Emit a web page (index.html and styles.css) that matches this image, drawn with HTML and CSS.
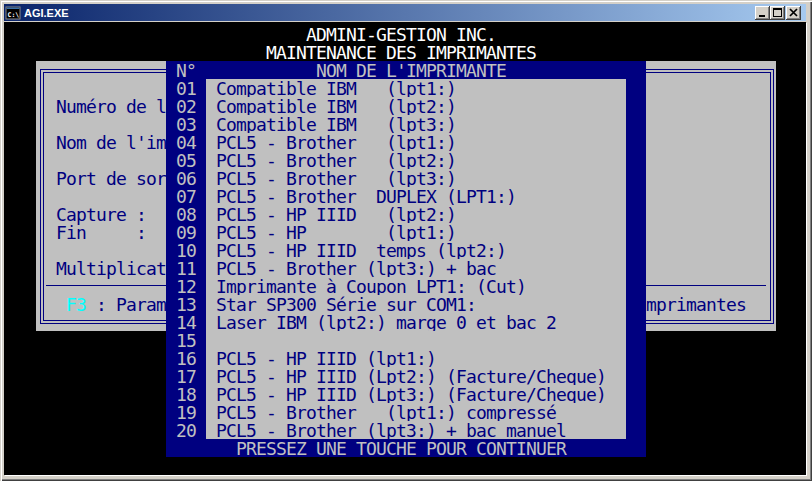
FILE: index.html
```html
<!DOCTYPE html>
<html lang="fr">
<head>
    <meta charset="UTF-8">
    <title>AGI.EXE</title>
    <link rel="stylesheet" href="styles.css">
</head>
<body>
    <div class="window">
        <div class="titlebar">
            <svg class="app-icon" width="16" height="16" viewBox="0 0 16 16">
                <rect x="1" y="2" width="14" height="12" fill="#000" stroke="#8a8a8a" stroke-width="1"/>
                <rect x="1.5" y="2.5" width="13" height="1.5" fill="#3a6ea5"/>
                <text x="2.5" y="11.5" font-family="DejaVu Sans Mono, monospace" font-size="6.5" font-weight="bold" fill="#fff">C:\</text>
            </svg>
            <span class="title">AGI.EXE</span>
            <div class="controls">
                <div class="ctl">
                    <svg width="15" height="14" viewBox="0 0 15 14" shape-rendering="crispEdges"><rect x="4" y="9" width="6" height="2" fill="#000"/></svg>
                </div>
                <div class="ctl">
                    <svg width="15" height="14" viewBox="0 0 15 14" shape-rendering="crispEdges"><rect x="3.5" y="2.5" width="8" height="8" fill="none" stroke="#000"/><rect x="3" y="3" width="9" height="1" fill="#000"/></svg>
                </div>
                <div class="ctl close">
                    <svg width="15" height="14" viewBox="0 0 15 14"><path d="M4 3 L11 10 M11 3 L4 10" stroke="#000" stroke-width="1.7"/></svg>
                </div>
            </div>
        </div>

        <div class="console">
            <div class="screen">
                <div class="line heading heading-1">ADMINI-GESTION INC.</div>
                <div class="line heading heading-2">MAINTENANCE DES IMPRIMANTES</div>

                <!-- fiche imprimante (sous la liste) -->
                <div class="panel">
                    <div class="frame">
                        <div class="frame-inner">
                            <div class="field">Numéro de l'imprimante :</div>
                            <div class="field"></div>
                            <div class="field">Nom de l'imprimante    :</div>
                            <div class="field"></div>
                            <div class="field">Port de sortie         :</div>
                            <div class="field"></div>
                            <div class="field">Capture :</div>
                            <div class="field">Fin     :</div>
                            <div class="field"></div>
                            <div class="field">Multiplicateur de caractères :</div>
                            <div class="rule"></div>
                            <div class="field"> <span class="key">F3</span> : Paramètres       ESC : Retour       F10 : Liste des imprimantes</div>
                        </div>
                    </div>
                </div>

                <!-- liste des imprimantes -->
                <div class="popup">
                    <div class="popup-head"><span class="no">N°</span><span class="head-title">NOM DE L'IMPRIMANTE</span></div>
                    <div class="entries">
                        <div class="entry"><span class="no">01</span><span class="name">Compatible IBM   (lpt1:)</span></div>
                        <div class="entry"><span class="no">02</span><span class="name">Compatible IBM   (lpt2:)</span></div>
                        <div class="entry"><span class="no">03</span><span class="name">Compatible IBM   (lpt3:)</span></div>
                        <div class="entry"><span class="no">04</span><span class="name">PCL5 - Brother   (lpt1:)</span></div>
                        <div class="entry"><span class="no">05</span><span class="name">PCL5 - Brother   (lpt2:)</span></div>
                        <div class="entry"><span class="no">06</span><span class="name">PCL5 - Brother   (lpt3:)</span></div>
                        <div class="entry"><span class="no">07</span><span class="name">PCL5 - Brother  DUPLEX (LPT1:)</span></div>
                        <div class="entry"><span class="no">08</span><span class="name">PCL5 - HP IIID   (lpt2:)</span></div>
                        <div class="entry"><span class="no">09</span><span class="name">PCL5 - HP        (lpt1:)</span></div>
                        <div class="entry"><span class="no">10</span><span class="name">PCL5 - HP IIID  temps (lpt2:)</span></div>
                        <div class="entry"><span class="no">11</span><span class="name">PCL5 - Brother (lpt3:) + bac</span></div>
                        <div class="entry"><span class="no">12</span><span class="name">Imprimante à Coupon LPT1: (Cut)</span></div>
                        <div class="entry"><span class="no">13</span><span class="name">Star SP300 Série sur COM1:</span></div>
                        <div class="entry"><span class="no">14</span><span class="name">Laser IBM (lpt2:) marge 0 et bac 2</span></div>
                        <div class="entry"><span class="no">15</span><span class="name"></span></div>
                        <div class="entry"><span class="no">16</span><span class="name">PCL5 - HP IIID (lpt1:)</span></div>
                        <div class="entry"><span class="no">17</span><span class="name">PCL5 - HP IIID (Lpt2:) (Facture/Cheque)</span></div>
                        <div class="entry"><span class="no">18</span><span class="name">PCL5 - HP IIID (Lpt3:) (Facture/Cheque)</span></div>
                        <div class="entry"><span class="no">19</span><span class="name">PCL5 - Brother   (lpt1:) compressé</span></div>
                        <div class="entry"><span class="no">20</span><span class="name">PCL5 - Brother (lpt3:) + bac manuel</span></div>
                    </div>
                    <div class="popup-foot">PRESSEZ UNE TOUCHE POUR CONTINUER</div>
                </div>
            </div>
        </div>
    </div>
</body>
</html>
```

FILE: styles.css
```css
body {
    margin: 0;
    padding: 0;
    background-color: #d4d0c8;
}

/* fenetre windows classique */
.window {
    width: 812px;
    height: 481px;
    box-sizing: border-box;
    padding: 4px 6px 6px 4px;
    background-color: #d4d0c8;
    display: flex;
    flex-direction: column;
    box-shadow: inset 1px 1px #d4d0c8, inset 2px 2px #fff, inset -1px -1px #404040, inset -2px -2px #808080;
}

.titlebar {
    height: 17px;
    margin-bottom: 1px;
    display: flex;
    align-items: center;
    background: linear-gradient(to right, #0a246a, #a6caf0);
    color: #fff;
    font-family: "Liberation Sans", Arial, sans-serif;
    font-weight: bold;
    font-size: 11px;
}

.app-icon {
    margin-left: 1px;
    margin-right: 3px;
}

.title {
    flex: 1;
}

.controls {
    display: flex;
    margin-right: 5px;
}

.ctl {
    width: 15px;
    height: 14px;
    background-color: #d4d0c8;
    box-shadow: inset -1px -1px #404040, inset 1px 1px #fff, inset -2px -2px #808080;
}

.ctl svg {
    display: block;
}

.ctl.close {
    margin-left: 1px;
}

/* ecran console 80 x 25, cellule 10 x 18 */
.console {
    flex: 1;
    background-color: #000;
    box-shadow: 1px 1px 0 #fff;
}

.screen {
    position: relative;
    width: 800px;
    height: 450px;
    margin: 3px 0 0 2px;
    font-family: "DejaVu Sans Mono", "Liberation Mono", monospace;
    font-size: 18px;
    letter-spacing: -0.837px;
    line-height: 20px;
    color: #c0c0c0;
}

.line,
.field,
.no,
.name,
.head-title,
.popup-foot {
    white-space: pre;
}

.line {
    height: 18px;
}

.heading {
    color: #fff;
}

.heading-1 {
    padding-left: 300px;
}

.heading-2 {
    padding-left: 260px;
}

.panel {
    margin-left: 30px;
    width: 740px;
    height: 270px;
    box-sizing: border-box;
    padding: 8px 2px 7px 4px;
    background-color: #c0c0c0;
    color: #000080;
}

.frame {
    height: 100%;
    box-sizing: border-box;
    border: 1px solid #000080;
    padding: 2px;
}

.frame-inner {
    height: 100%;
    box-sizing: border-box;
    border: 1px solid #000080;
    padding-top: 24px;
    overflow: hidden;
}

.field {
    height: 18px;
    padding-left: 12px;
}

.key {
    color: #00ffff;
}

.rule {
    height: 0;
    margin: 8px 4px 9px 2px;
    border-top: 1px solid #000080;
}

/* fenetre de choix par-dessus la fiche */
.popup {
    position: absolute;
    top: 36px;
    left: 160px;
    width: 480px;
    background-color: #000080;
    color: #c0c0c0;
}

.popup-head,
.entry {
    display: flex;
    height: 18px;
}

.no {
    width: 30px;
    padding-left: 10px;
}

.head-title {
    padding-left: 110px;
}

.name {
    width: 420px;
    box-sizing: border-box;
    padding-left: 10px;
    background-color: #c0c0c0;
    color: #000080;
}

.popup-foot {
    height: 18px;
    padding-left: 70px;
}
```
